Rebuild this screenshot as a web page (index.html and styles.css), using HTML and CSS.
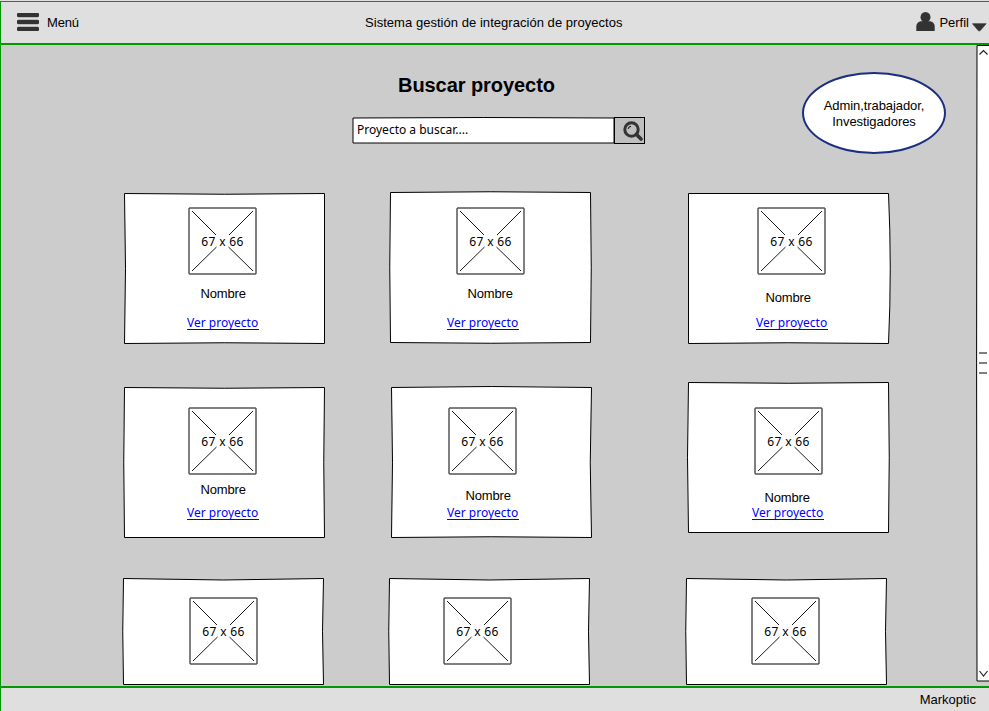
FILE: index.html
```html
<!DOCTYPE html>
<html lang="es">
<head>
<meta charset="utf-8">
<title>Buscar proyecto</title>
<link rel="stylesheet" href="styles.css">
</head>
<body>
<svg width="0" height="0" class="defs" aria-hidden="true">
  <symbol id="placeholder" viewBox="0 0 69 68">
    <rect x="1" y="1" width="67" height="66" rx=".3" fill="#fff" stroke="#000"/>
    <path d="M4 4L28 28M65 4L41 28M4 64L28.500 40M65 64L40.500 40" fill="none" stroke="#000" stroke-width=".9"/>
  </symbol>
</svg>
<div class="app">
  <header class="topbar">
    <div class="menu">
      <svg width="22" height="18" viewBox="0 0 22 18"><g fill="#333"><rect width="22" height="4" rx="1"/><rect y="7" width="22" height="4" rx="1"/><rect y="14" width="22" height="4" rx="1"/></g><path d="M1 4.500H21M1 6.500H21M1 11.500H21M1 13.500H21" stroke="#bbb"/></svg>
      <span>Menú</span>
    </div>
    <div class="brand">Sistema gestión de integración de proyectos</div>
    <div class="profile">
      <svg width="19" height="19" viewBox="0 0 19 19" fill="#333"><ellipse cx="9.500" cy="5.300" rx="5" ry="5.300"/><path d="M.3 19V14.500Q.3 10.500 4.500 9.300H14.500Q18.700 10.500 18.700 14.500V19Z"/></svg>
      <span>Perfil</span>
      <svg class="caret" width="15" height="9" viewBox="0 0 15 9"><path d="M.5 .7H14.200L8 7.800H6.500Z" fill="#333" stroke="#333" stroke-width=".7" stroke-linejoin="round"/></svg>
    </div>
  </header>
  <div class="body">
    <main class="content">
      <section class="hero">
        <div class="search-area">
          <h1>Buscar proyecto</h1>
          <div class="search">
            <div class="field">
              <svg class="outline" width="263" height="27" viewBox="0 0 263 27"><path d="M1 1Q131 0 262 1V26H1Z" fill="#fff" stroke="#000"/></svg>
              <span>Proyecto a buscar....</span>
            </div>
            <div class="search-button">
              <svg width="20" height="20" viewBox="0 0 20 20" fill="none" stroke="#333"><circle cx="8.500" cy="8.500" r="6.700" stroke-width="3"/><path d="M13.500 13.500L18 18" stroke-width="3.600" stroke-linecap="round"/><path d="M5.300 8Q5.500 5.500 8 5.300" stroke-width="1.200"/></svg>
            </div>
          </div>
        </div>
        <div class="roles">Admin,trabajador,<br>Investigadores</div>
      </section>
      <section class="grid">
        <article class="card c1">
          <svg class="outline" width="201" height="151"><path d="M.5 .5Q100 2 200.500 .5V150.500Q100 149 .5 150.500Q2.500 75 .5 .5Z"/></svg>
          <div class="thumb"><svg width="69" height="68"><use href="#placeholder"/></svg><span>67 x 66</span></div>
          <div class="name">Nombre</div><a class="link">Ver proyecto</a>
        </article>
        <article class="card c2">
          <svg class="outline" width="201" height="151"><path d="M.5 .5Q100 -1 200.500 .5Q202 75 200.500 150.500Q100 152 .5 150.500Q-1 75 .5 .5Z"/></svg>
          <div class="thumb"><svg width="69" height="68"><use href="#placeholder"/></svg><span>67 x 66</span></div>
          <div class="name">Nombre</div><a class="link">Ver proyecto</a>
        </article>
        <article class="card c3">
          <svg class="outline" width="201" height="151"><path d="M.5 .5H200.500Q204 75 200.500 150.500Q100 149 .5 150.500Z"/></svg>
          <div class="thumb"><svg width="69" height="68"><use href="#placeholder"/></svg><span>67 x 66</span></div>
          <div class="name">Nombre</div><a class="link">Ver proyecto</a>
        </article>
        <article class="card c4">
          <svg class="outline" width="201" height="151"><path d="M.5 .5Q100 2 200.500 .5Q199 75 200.500 150.500H.5Q-1 75 .5 .5Z"/></svg>
          <div class="thumb"><svg width="69" height="68"><use href="#placeholder"/></svg><span>67 x 66</span></div>
          <div class="name">Nombre</div><a class="link">Ver proyecto</a>
        </article>
        <article class="card c5">
          <svg class="outline" width="201" height="151"><path d="M.5 .5Q100 -1.500 200.500 .5Q198 75 200.500 150.500Q100 149 .5 150.500Q2.500 75 .5 .5Z"/></svg>
          <div class="thumb"><svg width="69" height="68"><use href="#placeholder"/></svg><span>67 x 66</span></div>
          <div class="name">Nombre</div><a class="link">Ver proyecto</a>
        </article>
        <article class="card c6">
          <svg class="outline" width="201" height="151"><path d="M.5 .5Q100 2 200.500 .5Q202 75 200.500 150.500H.5Q-1.500 75 .5 .5Z"/></svg>
          <div class="thumb"><svg width="69" height="68"><use href="#placeholder"/></svg><span>67 x 66</span></div>
          <div class="name">Nombre</div><a class="link">Ver proyecto</a>
        </article>
        <article class="card short c7">
          <svg class="outline" width="201" height="107"><path d="M.5 .5Q100 3.500 200.500 .5Q198.500 53 200.500 106.500H.5Q-1 53 .5 .5Z"/></svg>
          <div class="thumb"><svg width="69" height="68"><use href="#placeholder"/></svg><span>67 x 66</span></div>
        </article>
        <article class="card short c8">
          <svg class="outline" width="201" height="107"><path d="M.5 .5Q100 3.500 200.500 .5Q198.500 53 200.500 106.500H.5Q-1 53 .5 .5Z"/></svg>
          <div class="thumb"><svg width="69" height="68"><use href="#placeholder"/></svg><span>67 x 66</span></div>
        </article>
        <article class="card short c9">
          <svg class="outline" width="201" height="107"><path d="M.5 .5Q100 3.500 200.500 .5Q198.500 53 200.500 106.500H.5Q-1 53 .5 .5Z"/></svg>
          <div class="thumb"><svg width="69" height="68"><use href="#placeholder"/></svg><span>67 x 66</span></div>
        </article>
      </section>
    </main>
    <svg class="scrollbar" width="13" height="637" viewBox="0 0 13 637"><path d="M14 .5H1Q.2 318 1 636H14" fill="#fff" stroke="#000"/><path d="M3.500 9.500L7.500 5.500L11.500 9.500M3.500 626L7.500 631L11.500 626" fill="none" stroke="#222" stroke-width="1.200"/><path d="M3 308H11M3 318H11M3 328H11" stroke="#000"/></svg>
  </div>
  <footer class="footer">Markoptic</footer>
</div>
</body>
</html>
```
FILE: styles.css
```css
* { box-sizing: border-box; }

body {
  margin: 0;
  overflow: hidden;
  background: #dfdfdf;
  color: #000;
  font: 13px/15px "Liberation Sans", Arial, sans-serif;
}

svg { display: block; flex: none; }
.defs { position: absolute; }

.app {
  display: flex;
  flex-direction: column;
  width: 989px;
  height: 710px;
  margin-top: 1px;
  border-top: 1px solid #009900;
  border-left: 1px solid #009900;
}

.topbar {
  display: grid;
  grid-template-columns: 364px 1fr auto;
  height: 43px;
  flex: none;
  border-bottom: 2px solid #009900;
  background: #dfdfdf;
}
.menu { display: flex; gap: 8px; padding: 11px 0 0 16px; }
.menu span, .brand { padding-top: 2px; }
.menu span { letter-spacing: -.15px; }
.brand { margin-top: 11px; letter-spacing: .04px; }
.profile { display: flex; padding-top: 10px; }
.profile span { margin: 3px 3px 0 4px; }
.caret { margin: 11px 2px 0 0; }

.body {
  display: flex;
  height: 641px;
  flex: none;
  background: #cccccc;
}
.content { width: 975px; }

.hero { display: flex; height: 147px; padding-left: 351px; }
.search-area { width: 293px; }
h1 {
  margin: 29px 0 0 46px;
  font-size: 20px;
  line-height: 22px;
  letter-spacing: -.06px;
}
.search { display: flex; margin-top: 21px; height: 27px; }
.field {
  position: relative;
  width: 262px;
  padding: 5px 0 0 5px;
}
.field span {
  position: relative;
  font: 12px/15px "Comic Sans MS", "Noto Sans", sans-serif;
}
.outline { position: absolute; left: 0; top: 0; overflow: visible; }
.search-button {
  width: 31px;
  height: 27px;
  padding: 3px 0 0 8px;
  border: 1px solid #000;
  background: #bfbfbf;
}
.roles {
  width: 144px;
  height: 82px;
  margin: 27px 0 0 157px;
  padding-top: 24px;
  border: 2px solid #1a2f80;
  border-radius: 50%;
  background: #fff;
  line-height: 16px;
  letter-spacing: -.08px;
  text-align: center;
}

.grid {
  display: grid;
  grid-template-columns: 266px 297px 205px;
  grid-template-rows: 190px 196px 107px;
  align-items: start;
  padding-left: 122px;
}
.card {
  position: relative;
  display: flex;
  flex-direction: column;
  align-items: flex-start;
  width: 201px;
  height: 151px;
}
.short { height: 107px; }
.card .outline { fill: #fff; stroke: #000; }
.thumb {
  position: relative;
  height: 68px;
  margin: var(--thumb);
}
.thumb span {
  position: absolute;
  top: 27px;
  left: 0;
  width: 69px;
  font: 12px/15px "Comic Sans MS", "Noto Sans", sans-serif;
  letter-spacing: .35px;
  text-align: center;
}
.name {
  position: relative;
  left: .5px;
  margin: var(--name);
  letter-spacing: -.15px;
}
.link {
  position: relative;
  width: 72px;
  height: 15px;
  margin: var(--link);
  border-bottom: 1px solid #0000ff;
  color: #0000ff;
  font: 12px/15px "Comic Sans MS", "Noto Sans", sans-serif;
  white-space: nowrap;
}

.c1 { margin: 1px 0 0 1px; --thumb: 14px 0 0 64px; --name: 11px 0 0 76px; --link: 14px 0 0 63px; }
.c2 { margin: 0 0 0 1px; --thumb: 15px 0 0 66px; --name: 11px 0 0 77px; --link: 14px 0 0 57px; }
.c3 { margin: 1px 0 0 2px; --thumb: 14px 0 0 69px; --name: 15px 0 0 77px; --link: 10px 0 0 68px; }
.c4 { margin: 5px 0 0 1px; --thumb: 20px 0 0 64px; --name: 7px 0 0 76px; --link: 8px 0 0 63px; }
.c5 { margin: 5px 0 0 2px; --thumb: 20px 0 0 57px; --name: 13px 0 0 74px; --link: 2px 0 0 56px; }
.c6 { margin: 0 0 0 2px; --thumb: 25px 0 0 66px; --name: 15px 0 0 76px; --link: 0 0 0 64px; }
.c7 { --thumb: 19px 0 0 66px; }
.c8 { --thumb: 19px 0 0 54px; }
.c9 { --thumb: 19px 0 0 65px; }

.footer {
  height: 25px;
  flex: none;
  padding: 4px 13px 0 0;
  border-top: 2px solid #009900;
  background: #dfdfdf;
  text-align: right;
}
```
